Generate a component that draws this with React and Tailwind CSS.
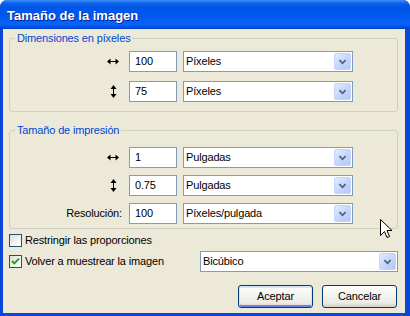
import React from "react";

function Chevron() {
  return (
    <svg width="17" height="17" viewBox="0 0 17 17">
      <path d="M5 7 L8.5 10.5 L12 7" fill="none" stroke="#4D6185" strokeWidth="2" />
    </svg>
  );
}

function Select({ value, w }) {
  return (
    <div className={`flex items-center h-[21px] border border-[#7F9DB9] bg-white ${w}`}>
      <span className="flex-1 pl-[2px] leading-[19px] whitespace-nowrap overflow-hidden">{value}</span>
      <div className="w-[17px] h-[17px] mr-[1px] rounded-[2px] border border-[#C4D4FB] bg-[linear-gradient(135deg,#E3EBFE_0%,#C6D6FC_50%,#B4C8F7_100%)] flex items-center justify-center">
        <Chevron />
      </div>
    </div>
  );
}

function Input({ value }) {
  return (
    <div className="w-[48px] h-[21px] border border-[#7F9DB9] bg-white pl-[5px] leading-[19px]">
      {value}
    </div>
  );
}

function HArrow() {
  return (
    <svg width="12" height="7" viewBox="0 0 12 7" className="block">
      <path d="M0 3.5 L3.5 0.5 L3.5 6.5 Z M12 3.5 L8.5 0.5 L8.5 6.5 Z" fill="#000" />
      <path d="M3 3.5 H9" stroke="#000" strokeWidth="1" />
    </svg>
  );
}

function VArrow() {
  return (
    <svg width="7" height="13" viewBox="0 0 7 13" className="block">
      <path d="M3.5 0 L0.5 4 L6.5 4 Z M3.5 13 L0.5 9 L6.5 9 Z" fill="#000" />
      <path d="M3.5 3.5 V9.5" stroke="#000" strokeWidth="1" />
    </svg>
  );
}

function Row({ label, value, unit }) {
  return (
    <div className="flex items-center h-[21px]">
      <div className="w-[113px] flex justify-end items-center">
        {label === "h" && (
          <div className="w-[12px] mr-[4px] flex justify-center"><HArrow /></div>
        )}
        {label === "v" && (
          <div className="w-[12px] mr-[4px] flex justify-center"><VArrow /></div>
        )}
        {label !== "h" && label !== "v" && <span className="pr-[1px]">{label}</span>}
      </div>
      <div className="ml-[6px]"><Input value={value} /></div>
      <div className="ml-[6px]"><Select value={unit} w="w-[170px]" /></div>
    </div>
  );
}

function Checkbox({ checked }) {
  return (
    <div className="w-[13px] h-[13px] border border-[#1C5180] bg-[linear-gradient(135deg,#DCDCD7_0%,#F4F4F0_60%,#FFFFFF_100%)] flex items-center justify-center shrink-0">
      {checked && (
        <svg width="11" height="11" viewBox="0 0 11 11">
          <path d="M2 5 L4.3 7.4 L9 2.6" fill="none" stroke="#21A121" strokeWidth="2" />
        </svg>
      )}
    </div>
  );
}

function Button({ children, def }) {
  return (
    <div
      className={`w-[75px] h-[23px] rounded-[3px] border border-[#003C74] bg-[linear-gradient(to_bottom,#FFFFFF_0%,#F5F4EF_40%,#ECEBE4_80%,#D6D0C5_100%)] flex items-center justify-center ${
        def
          ? "shadow-[inset_0_1px_0_1px_#CEE7FF,inset_0_-1px_0_1px_#6982EE]"
          : ""
      }`}
    >
      {children}
    </div>
  );
}

export default function App() {
  return (
    <div className="relative w-[410px] h-[316px] flex flex-col rounded-t-[7px] bg-[#0A47D6] overflow-hidden font-['Liberation_Sans',Arial,sans-serif] text-[11px] tracking-[-0.15px] text-black">
      <div className="h-[29px] shrink-0 flex items-center pl-[7px] pt-[3px] bg-[linear-gradient(to_bottom,#3D8FF7_0px,#0E64EC_3px,#0055E5_7px,#0058EE_16px,#0A62F7_24px,#0052E0_27px,#0042C6_29px)] text-white font-bold text-[13px] tracking-normal [text-shadow:1px_1px_0_#0A1E8C]">
        Tamaño de la imagen
      </div>
      <div className="flex-1 ml-[3px] mr-[5px] mb-[3px] bg-[#ECE9D8] flex flex-col pl-[6px] pr-[7px] pt-[2px]">
        <fieldset className="border border-[#D0D0BF] rounded-[3px] pb-[9px]">
          <legend className="ml-[5px] px-[2px] text-[#0046D5] leading-[14px]">Dimensiones en píxeles</legend>
          <div className="pt-[6px] flex flex-col gap-[9px]">
            <Row label="h" value="100" unit="Píxeles" />
            <Row label="v" value="75" unit="Píxeles" />
          </div>
        </fieldset>
        <fieldset className="mt-[11px] border border-[#D0D0BF] rounded-[3px] pb-[4px]">
          <legend className="ml-[5px] px-[2px] text-[#0046D5] leading-[14px]">Tamaño de impresión</legend>
          <div className="pt-[10px] flex flex-col gap-[7px]">
            <Row label="h" value="1" unit="Pulgadas" />
            <Row label="v" value="0.75" unit="Pulgadas" />
            <Row label="Resolución:" value="100" unit="Píxeles/pulgada" />
          </div>
        </fieldset>
        <div className="mt-[5px] h-[13px] flex items-center">
          <Checkbox />
          <span className="ml-[3px] leading-[13px]">Restringir las proporciones</span>
        </div>
        <div className="mt-[4px] h-[21px] flex items-center">
          <Checkbox checked />
          <span className="ml-[3px] leading-[13px]">Volver a muestrear la imagen</span>
          <div className="ml-auto"><Select value="Bicúbico" w="w-[198px]" /></div>
        </div>
        <div className="mt-[13px] flex justify-end gap-[9px] pr-[1px]">
          <Button def>Aceptar</Button>
          <Button>Cancelar</Button>
        </div>
      </div>
      <svg className="absolute left-[380px] top-[219px]" width="13" height="21" viewBox="0 0 13 21">
        <path d="M0.5 0.5 L0.5 16.5 L4.5 12.5 L7 18.5 L9.5 17.5 L7 11.5 L12 11.5 Z" fill="#fff" stroke="#000" strokeWidth="1" />
      </svg>
    </div>
  );
}
